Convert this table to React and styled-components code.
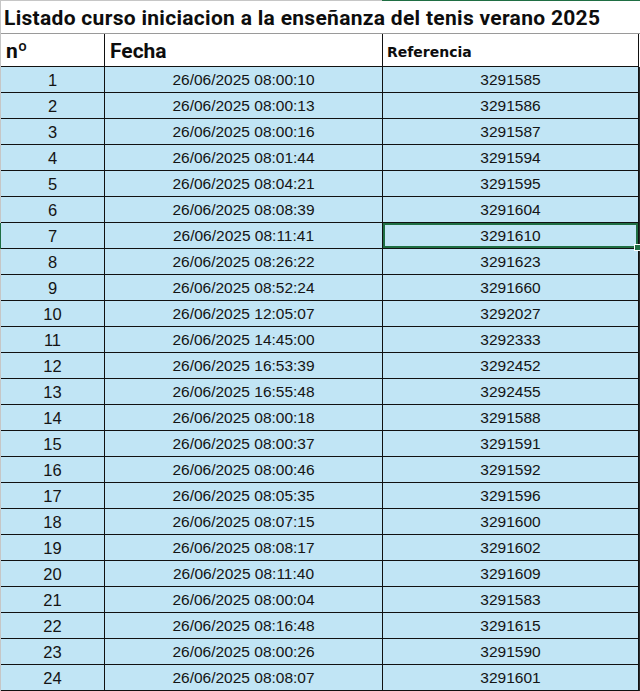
import React from "react";
import styled, { createGlobalStyle } from "styled-components";

const GlobalStyle = createGlobalStyle`
  html, body {
    margin: 0;
    padding: 0;
    background: #ffffff;
  }
`;

const green = "#1f6e43";
const fill = "#c1e5f5";

const rows = [
  [1, "26/06/2025 08:00:10", "3291585"],
  [2, "26/06/2025 08:00:13", "3291586"],
  [3, "26/06/2025 08:00:16", "3291587"],
  [4, "26/06/2025 08:01:44", "3291594"],
  [5, "26/06/2025 08:04:21", "3291595"],
  [6, "26/06/2025 08:08:39", "3291604"],
  [7, "26/06/2025 08:11:41", "3291610"],
  [8, "26/06/2025 08:26:22", "3291623"],
  [9, "26/06/2025 08:52:24", "3291660"],
  [10, "26/06/2025 12:05:07", "3292027"],
  [11, "26/06/2025 14:45:00", "3292333"],
  [12, "26/06/2025 16:53:39", "3292452"],
  [13, "26/06/2025 16:55:48", "3292455"],
  [14, "26/06/2025 08:00:18", "3291588"],
  [15, "26/06/2025 08:00:37", "3291591"],
  [16, "26/06/2025 08:00:46", "3291592"],
  [17, "26/06/2025 08:05:35", "3291596"],
  [18, "26/06/2025 08:07:15", "3291600"],
  [19, "26/06/2025 08:08:17", "3291602"],
  [20, "26/06/2025 08:11:40", "3291609"],
  [21, "26/06/2025 08:00:04", "3291583"],
  [22, "26/06/2025 08:16:48", "3291615"],
  [23, "26/06/2025 08:00:26", "3291590"],
  [24, "26/06/2025 08:08:07", "3291601"],
];

const SELECTED = 7;

const App = () => {
  return (
    <>
      <GlobalStyle />
      <Sheet>
        <TopStrip>
          <TopGray />
          <TopGreen />
        </TopStrip>

        <Row>
          <Strip />
          <TitleCell>Listado curso iniciacion a la enseñanza del tenis verano 2025</TitleCell>
        </Row>

        <Row>
          <Strip />
          <HeadCell width={104}>nº</HeadCell>
          <HeadCell width={278}>Fecha</HeadCell>
          <SmallHeadCell width={256}>Referencia</SmallHeadCell>
          <Edge />
        </Row>

        {rows.map(([n, fecha, ref]) => (
          <Row key={n}>
            <Strip active={n === SELECTED} />
            <NumCell>{n}</NumCell>
            <DateCell>{fecha}</DateCell>
            <RefCell selected={n === SELECTED}>
              {ref}
              {n === SELECTED && <Handle />}
            </RefCell>
            <Edge dark />
          </Row>
        ))}
      </Sheet>
    </>
  );
};

const Sheet = styled.div`
  width: 640px;
  display: flex;
  flex-direction: column;
  color: #141414;
`;

const TopStrip = styled.div`
  display: flex;
  height: 1px;
`;

const TopGray = styled.div`
  width: 382px;
  background: #c6c6c6;
`;

const TopGreen = styled.div`
  flex: 1;
  background: ${green};
`;

const Row = styled.div`
  display: flex;
`;

const Strip = styled.div`
  width: 1px;
  flex-shrink: 0;
  background: ${(p) => (p.active ? green : "#c6c6c6")};
`;

const Edge = styled.div`
  width: 1px;
  flex-shrink: 0;
  background: ${(p) => (p.dark ? "#2a2a2a" : "#ffffff")};
`;

const TitleCell = styled.div`
  width: 639px;
  height: 33px;
  box-sizing: border-box;
  border-bottom: 1px solid #9a9a9a;
  display: flex;
  align-items: center;
  padding: 1px 0 0 3px;
  font-family: Roboto, "Liberation Sans", sans-serif;
  font-weight: 700;
  font-size: 21px;
  letter-spacing: 0.3px;
  white-space: nowrap;
  color: #0d0d0d;
`;

const HeadCell = styled.div`
  width: ${(p) => p.width}px;
  height: 33px;
  box-sizing: border-box;
  border-right: 1px solid #111;
  border-bottom: 1px solid #111;
  display: flex;
  align-items: center;
  padding: 1px 0 0 5px;
  font-family: Roboto, "Liberation Sans", sans-serif;
  font-weight: 700;
  font-size: 21px;
  color: #0d0d0d;
  background: #ffffff;
`;

const SmallHeadCell = styled(HeadCell)`
  font-family: "DejaVu Sans", Verdana, sans-serif;
  font-size: 14px;
  padding: 4px 0 0 4px;
`;

const DataCell = styled.div`
  height: 26px;
  box-sizing: border-box;
  border-right: 1px solid #111;
  border-bottom: 1px solid #111;
  background: ${fill};
  display: flex;
  align-items: center;
  justify-content: center;
  font-family: "Liberation Sans", Arial, sans-serif;
  white-space: nowrap;
`;

const NumCell = styled(DataCell)`
  width: 104px;
  font-size: 16.5px;
  padding-top: 2px;
`;

const DateCell = styled(DataCell)`
  width: 278px;
  font-size: 15.5px;
`;

const RefCell = styled(DataCell)`
  width: 256px;
  font-size: 15.5px;
  position: relative;
  box-shadow: ${(p) => (p.selected ? `inset 0 0 0 2px ${green}` : "none")};
`;

const Handle = styled.span`
  position: absolute;
  right: -3px;
  bottom: -3px;
  width: 5px;
  height: 5px;
  background: ${green};
  border: 1px solid #ffffff;
  z-index: 2;
`;

export default App;
